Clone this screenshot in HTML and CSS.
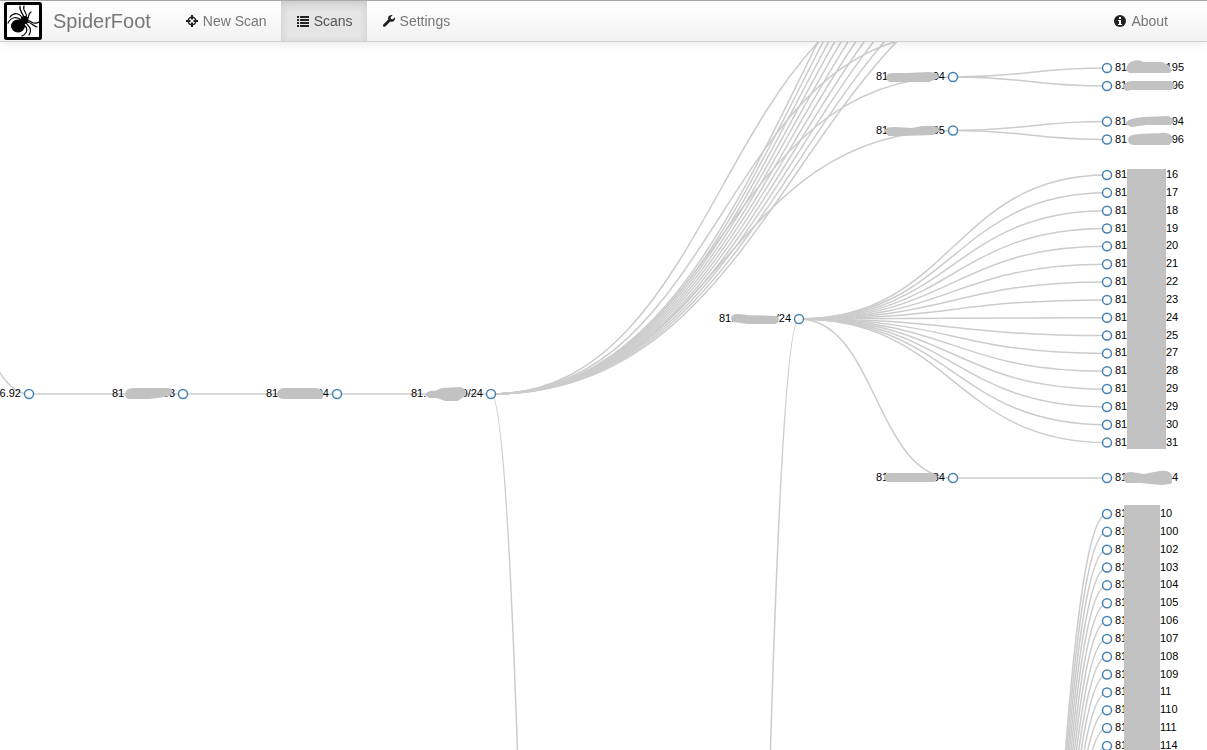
FILE: index.html
```html
<!DOCTYPE html>
<html lang="en">
<head>
    <meta charset="UTF-8">
    <meta name="viewport" content="width=device-width, initial-scale=1.0">
    <title>SpiderFoot</title>
    <link rel="stylesheet" href="styles.css">
</head>
<body>
    <nav class="navbar">
        <a class="brand" href="#">
            <svg class="logo" viewBox="0 0 38 38" aria-hidden="true">
                <rect x="1.5" y="1.5" width="35" height="35" rx="1" fill="#fff" stroke="#000" stroke-width="3"/>
                <g fill="none" stroke="#000" stroke-width="1.2" stroke-linecap="round">
                    <path d="M20 16 C20 12 15 10 16 4"/>
                    <path d="M22 15 C24 11 18 9 20 4"/>
                    <path d="M18 16 C16 11 10 10 6 15"/>
                    <path d="M17 18 C13 14 7 15 4 21"/>
                    <path d="M23 17 C26 16 23 12 27 10"/>
                    <path d="M24 19 C27 18 29 24 35 20"/>
                    <path d="M23 20 C27 20 29 24 33 25"/>
                    <path d="M22 21 C24 24 29 26 25 33"/>
                    <path d="M20 23 C24 26 24 31 18 34"/>
                </g>
                <ellipse cx="14" cy="24" rx="7" ry="6.500"/>
                <ellipse cx="20.500" cy="18" rx="4" ry="4"/>
            </svg>
            SpiderFoot
        </a>
        <ul class="nav">
            <li><a href="#">
                <svg class="icon" viewBox="0 0 14 14" aria-hidden="true">
                    <circle cx="7" cy="7" r="3.800" fill="none" stroke="#222" stroke-width="1.5"/>
                    <path fill="#222" d="M6 1h2v4.500H6zM6 8.500h2V13H6zM1 6h4.500v2H1zM8.500 6H13v2H8.500z"/>
                </svg>New Scan</a></li>
            <li class="active"><a href="#">
                <svg class="icon" viewBox="0 0 14 14" aria-hidden="true">
                    <path fill="#222" d="M1 2h2v2H1zM4 2h9v2H4zM1 5h2v2H1zM4 5h9v2H4zM1 8h2v2H1zM4 8h9v2H4zM1 11h2v2H1zM4 11h9v2H4z"/>
                </svg>Scans</a></li>
            <li><a href="#">
                <svg class="icon" viewBox="0 0 14 14" aria-hidden="true">
                    <path fill="#222" d="M13 3.200 10.800 5.300 9 4.900 8.600 3.200 10.700 1.100C9 .6 7 1.300 6.300 2.900 5.900 3.900 6 4.800 6.300 5.600L1.300 10.400C.2 11.600 1.800 13.600 3.300 12.500L8.300 7.600C11 8.600 13.700 6.300 13 3.200z"/>
                </svg>Settings</a></li>
        </ul>
        <ul class="nav nav-right">
            <li><a href="#">
                <svg class="icon" viewBox="0 0 14 14" aria-hidden="true">
                    <circle cx="7" cy="7" r="6" fill="#222"/>
                    <path fill="#fff" d="M6 3h2v2H6zM5 6h3v4h1v1H5v-1h1V7H5z"/>
                </svg>About</a></li>
        </ul>
    </nav>

    <svg id="graph" class="graph" role="img" aria-label="Scan discovery paths">
        <g id="links"></g>
        <g id="nodes"></g>
        <g id="masks">
            <path class="mask-box" d="M1127 169h39v280h-39z"/>
            <path class="mask-box" d="M1124 505h36v245h-36z"/>
            <path class="mask" d="M1128 69 Q1130 63 1134 63 Q1138 61 1143 64 H1162 Q1170 67 1169 71 H1130z"/>
            <path class="mask" d="M1125 87 Q1127 83 1133 83 H1170 Q1176 86 1171 88 H1130 Q1126 90 1125 87z"/>
            <path class="mask" d="M1128 123 Q1131 120 1143 119 L1168 118 Q1174 121 1170 123 H1146 L1132 125z"/>
            <path class="mask" d="M1130 140 Q1130 136 1139 136 L1160 135 Q1171 134 1171 140 L1168 143 H1135 Q1130 143 1130 140z"/>
            <path class="mask" d="M1125 478 Q1125 474 1131 474 L1144 476 L1160 473 Q1169 472 1170 476 V482 L1162 483 L1140 481 H1127z"/>
            <path class="mask" d="M888 78 Q888 75 893 75 H908 L928 74 Q937 74 936 77 L929 80 H890z"/>
            <path class="mask" d="M887 131 Q886 129 895 129 L912 130 L923 128 Q937 127 937 130 L933 133 L902 134 H889z"/>
            <path class="mask" d="M733 318 Q733 316 738 316 L748 317 L776 318 Q778 320 775 322 H748 L734 320z"/>
            <path class="mask" d="M886 478 Q886 475 890 475 H932 Q937 477 934 480 H888z"/>
            <path class="mask" d="M127 394 Q127 390 134 390 H168 Q173 391 169 394 L158 396 L149 397 H130 Q127 397 127 394z"/>
            <path class="mask" d="M279 394 Q280 390 284 390 H316 Q322 391 321 397 H284 Q280 397 279 394z"/>
            <path class="mask" d="M428 395 Q429 392 435 393 L442 390 L460 389 Q466 391 463 395 L457 399 H446 L437 396 H430z"/>
        </g>
    </svg>

    <script src="script.js"></script>
</body>
</html>
```
FILE: styles.css
```css
body {
    margin: 0;
    background-color: #fff;
    font-family: "Liberation Sans", Arial, sans-serif;
    font-size: 14px;
    line-height: 20px;
    overflow: hidden;
}
.navbar {
    position: fixed;
    top: 0;
    left: 0;
    right: 0;
    display: flex;
    box-sizing: border-box;
    height: 42px;
    padding: 0 25px 0 4px;
    border-top: 1px solid #a8a8ac;
    border-bottom: 1px solid #d0d0d0;
    background: linear-gradient(#fff, #f2f2f2);
    box-shadow: 0 1px 10px rgba(0, 0, 0, 0.1);
}
.navbar a {
    color: #777;
    text-decoration: none;
}
.brand {
    display: flex;
    align-items: center;
    gap: 11px;
    margin-right: 19px;
    font-size: 20px;
}
.logo {
    width: 38px;
    height: 38px;
}
.nav {
    display: flex;
    margin: 0;
    padding: 0;
    list-style: none;
}
.nav-right {
    margin-left: auto;
}
.nav a {
    display: flex;
    align-items: center;
    gap: 4px;
    box-sizing: border-box;
    height: 100%;
    padding: 0 14px 0 15px;
}
.nav .active a {
    color: #555;
    background-color: #e5e5e5;
    box-shadow: inset 0 3px 8px rgba(0, 0, 0, 0.125);
}
.icon {
    width: 14px;
    height: 14px;
}
.graph {
    display: block;
    width: 100%;
    height: 100vh;
}
.link {
    fill: none;
    stroke: #ccc;
    stroke-width: 1.5px;
}
.node circle {
    fill: #fff;
    stroke: steelblue;
    stroke-width: 1.5px;
}
.node text {
    font-size: 11px;
    fill: #000;
}
.mask, .mask-box {
    fill: #c2c2c2;
}
.mask {
    stroke: #c2c2c2;
    stroke-width: 4px;
    stroke-linejoin: round;
}
```
FILE: script.js
```js
var SVG = "http://www.w3.org/2000/svg";
var links = document.getElementById("links");
var nodes = document.getElementById("nodes");
var step = 17.84;

function add(parent, name, attrs, text) {
    var el = document.createElementNS(SVG, name);
    for (var key in attrs) {
        el.setAttribute(key, attrs[key]);
    }
    if (text) el.textContent = text;
    parent.appendChild(el);
    return el;
}

function link(x1, y1, x2, y2) {
    var mid = (x1 + x2) / 2;
    add(links, "path", {
        "class": "link",
        d: "M" + x1 + "," + y1 + "C" + mid + "," + y1 + " " + mid + "," + y2 + " " + x2 + "," + y2
    });
}

// start is the x of the first octet, end the x where the label stops
function node(x, y, start, first, end, last, anchor) {
    var g = add(nodes, "g", { "class": "node" });
    if (first) add(g, "text", { x: start, y: y + 3 }, first);
    add(g, "text", { x: end, y: y + 3, "text-anchor": anchor || "end" }, last);
    add(g, "circle", { cx: x, cy: y, r: 4.5 });
}

function leaf(y, last) {
    node(1107, y, 1115, "81", 1184, last);
}

// main chain
link(-125, 25, 29, 394);
link(29, 394, 183, 394);
link(183, 394, 337, 394);
link(337, 394, 491, 394);
link(491, 394, 645, 8090);
link(645, 8200, 799, 319);

[130.5, 77, 33, -20].forEach(function(y) {
    link(491, 394, 953, y);
});
for (var i = 0; i < 11; i++) {
    link(491, 394, 1107, -55 - i * step);
}

node(29, 394, 0, "", 21, "6.92");
node(183, 394, 112, "81", 175, ".93");
node(337, 394, 266, "81", 329, "94");
node(491, 394, 411, "81.", 483, "0/24");
node(799, 319, 719, "81.", 791, "/24");

// small groups
node(953, 77, 876, "81", 945, "94");
link(953, 77, 1107, 68);
link(953, 77, 1107, 86);
leaf(68, "195");
leaf(86, "96");

node(953, 130.5, 876, "81", 945, "95");
link(953, 130.5, 1107, 121.5);
link(953, 130.5, 1107, 139.5);
leaf(121.5, "94");
leaf(139.5, "96");

var groupA = [16, 17, 18, 19, 20, 21, 22, 23, 24, 25, 27, 28, 29, 29, 30, 31];
groupA.forEach(function(n, i) {
    var y = 175 + i * step;
    link(799, 319, 1107, y);
    node(1107, y, 1115, "81", 1166, n, "start");
});

link(799, 319, 953, 478);
link(953, 478, 1107, 478);
node(953, 478, 876, "81", 945, "34");
node(1107, 478, 1115, "81", 1178, "4");

var groupB = [10, 100, 102, 103, 104, 105, 106, 107, 108, 109, 11, 110, 111, 114];
groupB.forEach(function(n, i) {
    var y = 514 + i * step;
    link(953, 2400, 1107, y);
    node(1107, y, 1115, "81", 1160, n, "start");
});
```
